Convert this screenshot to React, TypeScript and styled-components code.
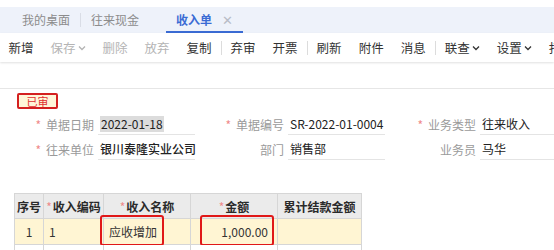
import React from "react";
import styled, { createGlobalStyle } from "styled-components";

const Global = createGlobalStyle`
  html, body {
    margin: 0;
    padding: 0;
    background: #ffffff;
  }
  body {
    font-family: "Noto Sans CJK SC", "Noto Sans", sans-serif;
    color: #333333;
  }
`;

const Page = styled.div`
  width: 554px;
  height: 250px;
  overflow: hidden;
  background: #ffffff;
  padding-top: 7px;
  box-sizing: border-box;
`;

const TabBar = styled.div`
  height: 26px;
  background: #eef2fa;
  display: flex;
  align-items: stretch;
  padding-left: 12px;
  font-size: 12px;
`;

const Tab = styled.div<{ $active?: boolean; $ml?: number }>`
  display: flex;
  align-items: center;
  gap: 10px;
  padding: 0 10px;
  margin-left: ${(p) => p.$ml ?? 0}px;
  color: ${(p) => (p.$active ? "#3a6bd4" : "#8c8c8c")};
  font-weight: ${(p) => (p.$active ? 600 : 400)};
  border-bottom: 2px solid ${(p) => (p.$active ? "#3a6bd4" : "transparent")};
  box-sizing: border-box;
`;

const TabSep = styled.div`
  width: 1px;
  height: 14px;
  background: #d9dde6;
  align-self: center;
`;

const Close = styled.span`
  color: #b8bcc6;
  font-size: 13px;
  font-weight: 400;
`;

const Toolbar = styled.div`
  height: 29px;
  display: flex;
  align-items: center;
  font-size: 12.5px;
  background: #ffffff;
  box-shadow: 0 1px 2px rgba(0, 0, 0, 0.12);
  position: relative;
  overflow: hidden;
`;

const Tool = styled.div<{ $disabled?: boolean }>`
  display: flex;
  align-items: center;
  gap: 2px;
  padding: 0 8.5px;
  white-space: nowrap;
  flex-shrink: 0;
  color: ${(p) => (p.$disabled ? "#b4b4b4" : "#333333")};
`;

const ToolSep = styled.div`
  width: 1px;
  height: 14px;
  margin: 0 0.5px;
  flex-shrink: 0;
  background: #dcdcdc;
`;

const Chevron = () => (
  <svg width="8" height="6" viewBox="0 0 8 6">
    <path d="M1 1.5 L4 4.5 L7 1.5" fill="none" stroke="currentColor" strokeWidth="1.3" />
  </svg>
);

const Gap = styled.div`
  height: 26px;
  border-bottom: 1px solid #e6e6e6;
`;

const Body = styled.div`
  padding: 4px 0 0 17px;
`;

const Badge = styled.div`
  width: 41px;
  height: 16px;
  box-sizing: border-box;
  border: 2px solid #d42020;
  border-radius: 2px;
  background: #fff6d9;
  color: #e03030;
  font-size: 11px;
  display: flex;
  align-items: center;
  justify-content: center;
  line-height: 1;
`;

const Form = styled.div`
  display: grid;
  grid-template-columns: 58px 97px 93px 97px 95px 1fr;
  grid-auto-rows: 22px;
  row-gap: 3px;
  margin: 4px 0 0 23px;
  font-size: 12px;
`;

const Label = styled.div`
  display: flex;
  align-items: center;
  justify-content: flex-end;
  padding-right: 4px;
  color: #9a9a9a;
  white-space: nowrap;
`;

const Star = styled.span`
  color: #ef8a8a;
  margin-right: 5px;
`;

const Input = styled.div<{ $bold?: boolean }>`
  display: flex;
  align-items: center;
  padding-left: 2px;
  border-bottom: 1px solid #e4e4e4;
  color: #222222;
  font-weight: ${(p) => (p.$bold ? 500 : 400)};
  white-space: nowrap;
`;

const Selected = styled.span`
  background: #dcdcdc;
  padding: 0 1px;
  line-height: 16px;
`;

const Table = styled.div`
  margin: 33px 0 0 -3px;
  display: grid;
  grid-template-columns: 29px 60px 87px 87px 84px;
  grid-template-rows: 25px 26px 12px;
  width: max-content;
  border-left: 1px solid #d6d6d6;
  border-top: 1px solid #d6d6d6;
  font-size: 12px;
`;

const Cell = styled.div<{ $head?: boolean; $row?: boolean; $align?: string }>`
  position: relative;
  display: flex;
  align-items: center;
  justify-content: ${(p) => p.$align ?? "center"};
  padding: 0 ${(p) => (p.$align === "flex-end" ? "9px" : "5px")} 0 5px;
  border-right: 1px solid #d6d6d6;
  border-bottom: 1px solid #d6d6d6;
  background: ${(p) => (p.$head ? "#ebebeb" : p.$row ? "#fff5d3" : "#ffffff")};
  font-weight: ${(p) => (p.$head ? 700 : 400)};
  color: ${(p) => (p.$head ? "#2a2a2a" : "#333333")};
  white-space: nowrap;
  box-sizing: border-box;
`;

const HeadStar = styled.span`
  color: #ef8a8a;
  font-weight: 400;
  margin-right: 1px;
`;

const Mark = styled.div<{ $left: number; $width: number }>`
  position: absolute;
  left: ${(p) => p.$left}px;
  top: -4px;
  width: ${(p) => p.$width}px;
  height: 31px;
  border: 2px solid #e01818;
  border-radius: 3px;
  box-sizing: border-box;
  pointer-events: none;
`;

export default function App() {
  return (
    <Page>
      <Global />
      <TabBar>
        <Tab>我的桌面</Tab>
        <TabSep />
        <Tab>往来现金</Tab>
        <Tab $active $ml={17}>
          收入单
          <Close>✕</Close>
        </Tab>
      </TabBar>
      <Toolbar>
        <Tool>新增</Tool>
        <Tool $disabled>
          保存<Chevron />
        </Tool>
        <Tool $disabled>删除</Tool>
        <Tool $disabled>放弃</Tool>
        <Tool>复制</Tool>
        <ToolSep />
        <Tool>弃审</Tool>
        <Tool>开票</Tool>
        <ToolSep />
        <Tool>刷新</Tool>
        <Tool>附件</Tool>
        <Tool>消息</Tool>
        <ToolSep />
        <Tool>
          联查<Chevron />
        </Tool>
        <Tool>
          设置<Chevron />
        </Tool>
        <Tool>打印</Tool>
      </Toolbar>
      <Gap />
      <Body>
        <Badge>已审</Badge>
        <Form>
          <Label>
            <Star>*</Star>单据日期
          </Label>
          <Input>
            <Selected>2022-01-18</Selected>
          </Input>
          <Label>
            <Star>*</Star>单据编号
          </Label>
          <Input>SR-2022-01-0004</Input>
          <Label>
            <Star>*</Star>业务类型
          </Label>
          <Input>往来收入</Input>

          <Label>
            <Star>*</Star>往来单位
          </Label>
          <Input $bold>银川泰隆实业公司</Input>
          <Label>部门</Label>
          <Input>销售部</Input>
          <Label>业务员</Label>
          <Input>马华</Input>
        </Form>
        <Table>
          <Cell $head>序号</Cell>
          <Cell $head>
            <HeadStar>*</HeadStar>收入编码
          </Cell>
          <Cell $head>
            <HeadStar>*</HeadStar>收入名称
          </Cell>
          <Cell $head>
            <HeadStar>*</HeadStar>金额
          </Cell>
          <Cell $head>累计结款金额</Cell>

          <Cell $row>1</Cell>
          <Cell $row $align="flex-start">1</Cell>
          <Cell $row $align="flex-start">
            应收增加
            <Mark $left={-4} $width={64} />
          </Cell>
          <Cell $row $align="flex-end">
            1,000.00
            <Mark $left={9} $width={74} />
          </Cell>
          <Cell $row />

          <Cell />
          <Cell />
          <Cell />
          <Cell />
          <Cell />
        </Table>
      </Body>
    </Page>
  );
}
